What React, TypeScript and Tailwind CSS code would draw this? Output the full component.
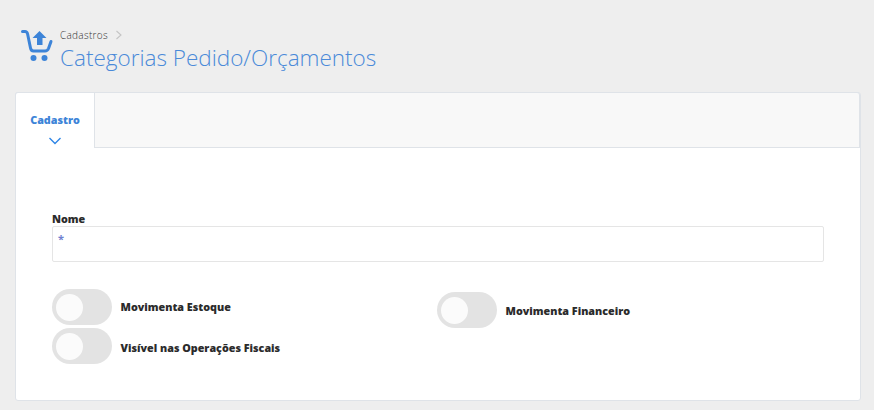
const Toggle = ({ label, labelClass }: { label: string; labelClass: string }) => (
  <div className="flex items-center">
    <div className="w-[59.5px] h-[36px] rounded-full bg-[#e3e3e3] py-[4.5px] pl-[4px] shrink-0">
      <div className="w-[27px] h-[27px] rounded-full bg-[#fbfbfb]" />
    </div>
    <span className={`ml-[9px] text-[10.75px] font-extrabold text-[#2b2b2b] leading-none ${labelClass}`}>{label}</span>
  </div>
);

export default function App() {
  return (
    <div className="w-[874px] h-[410px] overflow-hidden bg-[#eeeeee] font-['Open_Sans',sans-serif]">
      {/* Cabeçalho */}
      <div className="flex pt-[29px] pl-[21px] h-[92px]">
        <svg width="32" height="34" viewBox="0 0 32 34" fill="none" className="shrink-0">
          <path d="M1.5 2.5 H4 Q6 2.5 6.6 5 L9.5 19 Q10 22 12.5 22 H24 Q26.5 22 27.5 19.5 L30 12.5" stroke="#3d84d8" strokeWidth="3" strokeLinecap="round" strokeLinejoin="round" />
          <path d="M18.5 2 L25.5 9 H21.5 V16 H16 V9 H11.5 Z" fill="#3d84d8" />
          <circle cx="12.5" cy="29" r="3" fill="#3d84d8" />
          <circle cx="23.5" cy="29" r="3" fill="#3d84d8" />
        </svg>
        <div className="ml-[7px] -mt-[1px]">
          <div className="flex items-center text-[10px] font-light leading-[14px] tracking-[0.3px] text-[#333333]">
            Cadastros
            <svg width="8" height="10" viewBox="0 0 8 10" fill="none" className="ml-[7px]">
              <path d="M1.5 1 L6 5 L1.5 9" stroke="#c4c4c4" strokeWidth="1.1" />
            </svg>
          </div>
          <h1 className="text-[22.5px] font-light leading-[32px] text-[#4a8ad9]">Categorias Pedido/Orçamentos</h1>
        </div>
      </div>

      {/* Painel */}
      <div className="ml-[15px] w-[846px] h-[309px] bg-white border border-[#dfe3e8] rounded-[3px]">
        <div className="flex h-[56px] -mt-px -ml-px">
          <div className="w-[80px] bg-white border-t border-l border-r border-[#dfe3e8] rounded-tl-[3px] flex flex-col items-center pt-[19px]">
            <span className="text-[10.75px] font-extrabold leading-[16px] text-[#3d84d8]">Cadastro</span>
            <svg width="14" height="8" viewBox="0 0 14 8" fill="none" className="mt-[9px]">
              <path d="M1.5 1 L7 6.5 L12.5 1" stroke="#2f86e6" strokeWidth="1.4" />
            </svg>
          </div>
          <div className="flex-1 bg-[#f8f8f8] border-t border-b border-r border-[#dfe3e8] rounded-tr-[3px]" />
        </div>

        <div className="pl-[36px] pt-[65px]">
          <label className="block text-[10.75px] font-extrabold leading-[13px] text-[#2b2b2b]">Nome</label>
          <div className="w-[772px] h-[36px] border border-[#e5e5e5] rounded-[2px] bg-white pl-[5px] pt-[4px] text-[11px] font-bold leading-[16px] text-[#6f7fd0]">
            *
          </div>

          <div className="grid grid-cols-[385px_1fr] mt-[27px]">
            <div className="flex flex-col gap-[3px]">
              <Toggle label="Movimenta Estoque" labelClass="mt-0" />
              <Toggle label="Visível nas Operações Fiscais" labelClass="mt-[4px]" />
            </div>
            <div className="pt-[3px]">
              <Toggle label="Movimenta Financeiro" labelClass="mt-[2px]" />
            </div>
          </div>
        </div>
      </div>
    </div>
  );
}
